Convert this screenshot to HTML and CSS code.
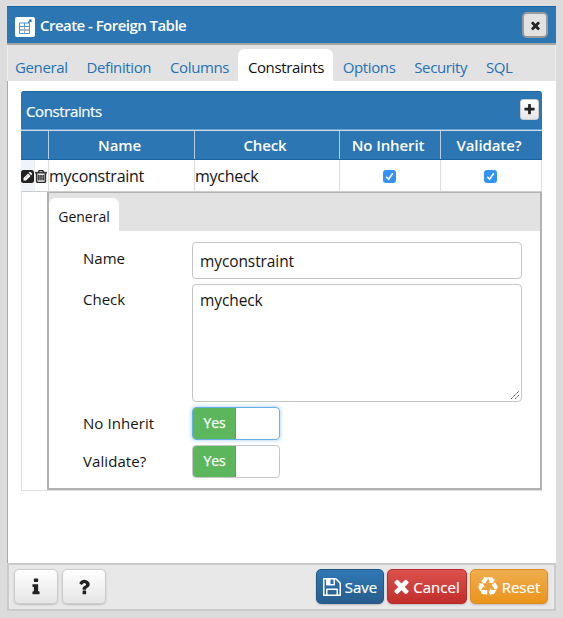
FILE: index.html
```html
<!DOCTYPE html>
<html lang="en">
<head>
<meta charset="utf-8">
<title>Create - Foreign Table</title>
<link rel="stylesheet" href="styles.css">
</head>
<body>
<main class="dialog">
  <header class="titlebar">
    <span class="table-icon"><svg viewBox="0 0 20 20" width="20" height="20" fill="none"><path d="M4.5 6h10v10.500h-10zM4.500 9.500h10M4.500 13h10M9.500 6v10.500" stroke="#489bd2"/><path d="M5 13h9M9.500 10v6" stroke="#aaa"/><path d="M13 6l3-3M14 3h2v2" stroke="#2477b7" stroke-width="1.200"/></svg></span>
    <h1>Create - Foreign Table</h1>
    <button class="close" aria-label="Close"><svg viewBox="0 0 1792 1792" width="13" height="13"><path d="M1490 1322q0 40-28 68l-136 136q-28 28-68 28t-68-28l-294-294-294 294q-28 28-68 28t-68-28l-136-136q-28-28-28-68t28-68l294-294-294-294q-28-28-28-68t28-68l136-136q28-28 68-28t68 28l294 294 294-294q28-28 68-28t68 28l136 136q28 28 28 68t-28 68l-294 294 294 294q28 28 28 68z"/></svg></button>
  </header>
  <nav class="tabs">
    <a>General</a><a>Definition</a><a>Columns</a><a class="active">Constraints</a><a>Options</a><a>Security</a><a>SQL</a>
  </nav>
  <section class="content">
    <div class="grid-title"><span>Constraints</span>
      <button class="add" aria-label="Add"><svg viewBox="0 0 1792 1792" width="13" height="13"><path d="M1600 736v192q0 40-28 68t-68 28h-416v416q0 40-28 68t-68 28h-192q-40 0-68-28t-28-68v-416h-416q-40 0-68-28t-28-68v-192q0-40 28-68t68-28h416v-416q0-40 28-68t68-28h192q40 0 68 28t28 68v416h416q40 0 68 28t28 68z"/></svg></button>
    </div>
    <div class="row head"><span></span><span>Name</span><span>Check</span><span>No Inherit</span><span>Validate?</span></div>
    <div class="row data">
      <span class="actions">
        <i class="edit"><svg viewBox="0 0 13 13" width="13" height="13"><rect width="13" height="13" rx="2.500" fill="#222"/><path d="M2.500 10.500V8l4.600-4.600 2.500 2.500L5 10.500zM7.700 2.800l.8-.8q.5-.5 1 0l1.500 1.500q.5.5 0 1l-.8.8z" fill="#fff"/><path d="M4 8.400l3.300-3.300" stroke="#777" stroke-width=".6"/></svg></i>
        <i class="trash"><svg viewBox="192 128 1408 1536" width="12" height="13"><path d="M704 736v576q0 14-9 23t-23 9h-64q-14 0-23-9t-9-23v-576q0-14 9-23t23-9h64q14 0 23 9t9 23zm256 0v576q0 14-9 23t-23 9h-64q-14 0-23-9t-9-23v-576q0-14 9-23t23-9h64q14 0 23 9t9 23zm256 0v576q0 14-9 23t-23 9h-64q-14 0-23-9t-9-23v-576q0-14 9-23t23-9h64q14 0 23 9t9 23zm128 724v-948h-896v948q0 22 7 40.500t14.500 27 10.500 8.500h832q3 0 10.500-8.500t14.500-27 7-40.500zm-672-1076h448l-48-117q-7-9-17-11h-317q-10 2-17 11zm928 32v64q0 14-9 23t-23 9h-96v948q0 83-47 143.500t-113 60.500h-832q-66 0-113-58.500t-47-141.500v-952h-96q-14 0-23-9t-9-23v-64q0-14 9-23t23-9h309l70-167q15-37 54-63t79-26h320q40 0 79 26t54 63l70 167h309q14 0 23 9t9 23z"/></svg></i>
      </span>
      <span>myconstraint</span><span>mycheck</span>
      <span class="center"><i class="checkbox"><svg viewBox="0 0 13 13" width="13" height="13"><path d="M3.300 6.800l2.300 2.500 4.200-6" fill="none" stroke="#fff" stroke-width="1.500"/></svg></i></span>
      <span class="center"><i class="checkbox"><svg viewBox="0 0 13 13" width="13" height="13"><path d="M3.300 6.800l2.300 2.500 4.200-6" fill="none" stroke="#fff" stroke-width="1.500"/></svg></i></span>
    </div>
    <div class="detail">
      <div class="subpanel">
        <div class="subtabs"><span>General</span></div>
        <div class="form">
          <label>Name</label><div class="input">myconstraint</div>
          <label>Check</label><div class="input area">mycheck<svg class="grip" viewBox="0 0 10 10" width="10" height="10"><path d="M1 9l8-8M5 9l4-4" stroke="#555" stroke-dasharray="1.600 .5"/></svg></div>
          <label class="mid">No Inherit</label><div class="switch focus"><span>Yes</span></div>
          <label class="mid">Validate?</label><div class="switch"><span>Yes</span></div>
        </div>
      </div>
    </div>
  </section>
  <footer class="footer">
    <button class="btn plain" aria-label="Information"><svg viewBox="0 0 1792 1792" width="20" height="20"><path d="M1216 1344v128q0 26-19 45t-45 19h-512q-26 0-45-19t-19-45v-128q0-26 19-45t45-19h64v-384h-64q-26 0-45-19t-19-45v-128q0-26 19-45t45-19h384q26 0 45 19t19 45v576h64q26 0 45 19t19 45zm-128-1152v192q0 26-19 45t-45 19h-256q-26 0-45-19t-19-45v-192q0-26 19-45t45-19h256q26 0 45 19t19 45z"/></svg></button>
    <button class="btn plain" aria-label="Help"><svg viewBox="0 0 1792 1792" width="20" height="20"><path d="M1088 1256v240q0 16-12 28t-28 12h-240q-16 0-28-12t-12-28v-240q0-16 12-28t28-12h240q16 0 28 12t12 28zm316-600q0 54-15.500 101t-35 76.500-55 59.500-57.500 43.500-61 35.500q-41 23-68.500 65t-27.500 67q0 17-12 32.500t-28 15.500h-240q-15 0-25.500-18.500t-10.500-37.500v-45q0-83 65-156.500t143-108.500q59-27 84-56t25-76q0-42-46.500-74t-107.500-32q-65 0-108 29-35 25-107 115-13 16-31 16-12 0-25-8l-164-125q-13-10-15.500-25t5.500-28q160-266 464-266 80 0 161 31t146 83 106 127.500 41 158.500z"/></svg></button>
    <button class="btn save"><svg viewBox="128 128 1536 1536" width="18" height="18"><path d="M512 1536h768v-384h-768v384zm896 0h128v-896q0-14-10-38.500t-20-34.500l-281-281q-10-10-34-20t-39-10v416q0 40-28 68t-68 28h-576q-40 0-68-28t-28-68v-416h-128v1280h128v-416q0-40 28-68t68-28h832q40 0 68 28t28 68v416zm-384-928v-320q0-13-9.500-22.500t-22.500-9.500h-192q-13 0-22.500 9.500t-9.500 22.500v320q0 13 9.500 22.500t22.500 9.500h192q13 0 22.500-9.500t9.500-22.500zm640 32v928q0 40-28 68t-68 28h-1344q-40 0-68-28t-28-68v-1344q0-40 28-68t68-28h928q40 0 88 20t76 48l280 280q28 28 48 76t20 88z"/></svg><span>Save</span></button>
    <button class="btn cancel"><svg viewBox="302 302 1188 1252" width="15" height="15"><path d="M1490 1322q0 40-28 68l-136 136q-28 28-68 28t-68-28l-294-294-294 294q-28 28-68 28t-68-28l-136-136q-28-28-28-68t28-68l294-294-294-294q-28-28-28-68t28-68l136-136q28-28 68-28t68 28l294 294 294-294q28-28 68-28t68 28l136 136q28 28 28 68t-28 68l-294 294 294 294q28 28 28 68z"/></svg><span>Cancel</span></button>
    <button class="btn reset"><svg viewBox="0 0 1792 1792" width="20" height="20"><path d="M836 1169l-15 368-2 22-420-29q-36-3-67-31.500t-47-65.500q-11-27-14.500-55t4-65 12-55 21.500-64 19-53q78 12 509 28zm-387-586l180 379-147-92q-63 72-111.500 144.500t-72.500 125-39.500 94.500-18.500 63l-4 21-190-357q-17-26-18-56t6-47l8-18q35-63 114-188l-140-86zm1231 517l-188 359q-12 29-36.500 46.500t-43.500 20.500l-18 4q-71 7-219 12l8 164-230-367 211-362 7 173q170 16 283 5t170-33zm-785-924q-47 63-265 435l-317-187-19-12 225-356q20-31 60-45t80-10q24 2 48.500 12t42 21 41.500 33 36 34.500 36 39.500 32 35zm655 307l212 363q18 37 12.500 76t-27.500 74q-13 20-33 37t-38 28-48.500 22-47 16-51.500 14-46 12q-34-72-265-436l313-195zm-143-226l142-83-220 373-419-20 151-86q-34-89-75-166t-75.500-123.500-64.500-80-47-46.500l-17-13 405 1q31-3 58 10.500t39 28.500l11 15q39 61 112 190z"/></svg><span>Reset</span></button>
  </footer>
</main>
</body>
</html>
```
FILE: styles.css
```css
* { box-sizing: border-box; }
body { margin: 0; height: 618px; padding: 6px 7px 7px; background: #dcdcdc; color: #151515; font: 15px/20px "Open Sans", sans-serif; overflow: hidden; }
button { font: inherit; padding: 0; }
svg { display: block; fill: currentColor; flex: none; }
svg[fill="none"] { fill: none; }
.dialog { height: 605px; display: flex; flex-direction: column; }
.titlebar { height: 39px; flex: none; border-top: 1px solid #1765a4; border-bottom: 2px solid #a5a5a5; background: #2c76b4; display: flex; align-items: center; padding: 0 8px; color: #fff; }
.table-icon { width: 20px; height: 20px; border-radius: 2px; background: #fff; margin: 3px 5px 0 0; }
h1 { font-size: 15px; line-height: 20px; font-weight: 600; letter-spacing: -.54px; margin: 0; flex: 1; }
.close { width: 26px; height: 26px; border: 2px solid #999; border-radius: 5px; background: #e2e2e2; display: grid; place-items: center; color: #222; }
.tabs { height: 36px; flex: none; display: flex; align-items: flex-end; background: #e2e2e2; border-left: 1px solid #eee; border-right: 1px solid #eee; color: #2272b5; }
.tabs a { height: 32px; padding: 8px 9.4px 0; letter-spacing: -.37px; }
.tabs a:first-child { padding-left: 7px; }
.tabs .active { background: #fff; color: #111; border-radius: 6px 6px 0 0; }
.content { flex: 1; background: #fff; padding: 10px 14px 0 13px; border-left: 1px solid #aaa; }
.grid-title { height: 39px; background: #2c76b4; border-top: 1px solid #1765a4; border-bottom: 1px solid #65a1d1; border-radius: 3px 3px 0 0; color: #fff; display: flex; align-items: center; justify-content: space-between; padding: 1px 3px 0 5px; font-size: 15px; letter-spacing: -.39px; -webkit-text-stroke: .2px #fff; }
.add { width: 19px; height: 21px; margin-top: -3px; border: 1px solid #ccc; border-radius: 3px; background: linear-gradient(#fff, #e5e5e5); color: #222; display: grid; place-items: center; }
.row { display: grid; grid-template-columns: 28px 146px 145px 101px 101px; }
.row > span { border-right: 1px solid #ddd; }
.head { height: 30px; background: #2c76b4; border-top: 1px solid #d0dce7; border-bottom: 1px solid #1765a4; color: #fff; font-weight: 600; text-align: center; }
.head > span { padding: 4px 4px 0 0; border-color: #b7cce0; letter-spacing: -.1px; }
.head > span:last-child { border-color: #2c76b4; }
.data { height: 31px; border-left: 1px solid #ddd; grid-template-columns: 27px 146px 145px 101px 101px; font-size: 16px; letter-spacing: -.27px; }
.data > span { padding-top: 6px; display: flex; }
.data .actions { padding: 0; }
.actions i { width: 13px; padding-top: 10px; }
.edit { background: #edf5fb; margin-left: -1px; }
.trash { color: #222; border-left: 1px solid #eee; }
.trash path { stroke: #222; stroke-width: 50; }
.data .center { justify-content: center; align-items: flex-start; padding: 10px 1px 0 0; }
.checkbox { width: 13px; height: 13px; border-radius: 3px; background: #3393f5; }
.detail { height: 300px; border: 1px solid #ddd; border-top-color: #ccc; border-right: 0; padding-left: 25px; }
.subpanel { height: 298px; border: 2px solid #b2b2b2; border-top-width: 1px; }
.subtabs { height: 38px; background: #e2e2e2; display: flex; align-items: flex-end; }
.subtabs span { height: 33px; width: 70px; background: #fff; border-radius: 6px 6px 0 0; text-align: center; padding-top: 9px; font-size: 14px; }
.form { display: grid; grid-template-columns: 109px 330px; grid-template-rows: 37px 119px 34px 34px; row-gap: 4px; padding: 11px 0 0 34px; }
.form label { padding-top: 6px; }
.form .mid { padding-top: 7px; letter-spacing: .07px; }
.input { border: 1px solid #c6c6c6; border-radius: 4px; padding: 8px 7px; font-size: 15.5px; letter-spacing: -.1px; }
.area { position: relative; margin-top: 1px; padding-top: 5px; }
.grip { position: absolute; right: 1px; bottom: 1px; }
.switch { width: 88px; height: 33px; margin-top: 1px; border: 1px solid #c6c6c6; border-radius: 4px; overflow: hidden; }
.switch span { display: block; width: 43px; height: 31px; background: #5cb65c; border-right: 1px solid #4aae49; color: #fff; text-align: center; padding: 5px 0 0 1px; font-size: 14px; letter-spacing: -.2px; -webkit-text-stroke: .25px #fff; }
.focus { border-color: #66afe9; box-shadow: 0 0 4px #9bcaf0; }
.footer { height: 48px; flex: none; border: 2px solid #cbcbcb; background: #e8e8e8; padding: 4px 6px 5px 5px; display: flex; gap: 3px; }
.btn { height: 35px; border: 1px solid; border-radius: 5px; display: flex; align-items: center; justify-content: center; gap: 4px; color: #fff; font-size: 15px; box-shadow: 0 1px 2px #bbb; }
.btn span { -webkit-text-stroke: .2px #fff; }
.plain { width: 44px; background: linear-gradient(#fff, #e5e5e5); border-color: #ccc; color: #222; }
.plain + .plain { margin-left: 1px; }
.save { width: 68px; margin-left: auto; background: linear-gradient(#2f78b6, #285d8d); border-color: #235885; }
.cancel { width: 80px; background: linear-gradient(#dc514d, #c12e2b); border-color: #b82c29; }
.reset { width: 78px; background: linear-gradient(#f0ad4e, #eb941b); border-color: #df8d1f; }
```
